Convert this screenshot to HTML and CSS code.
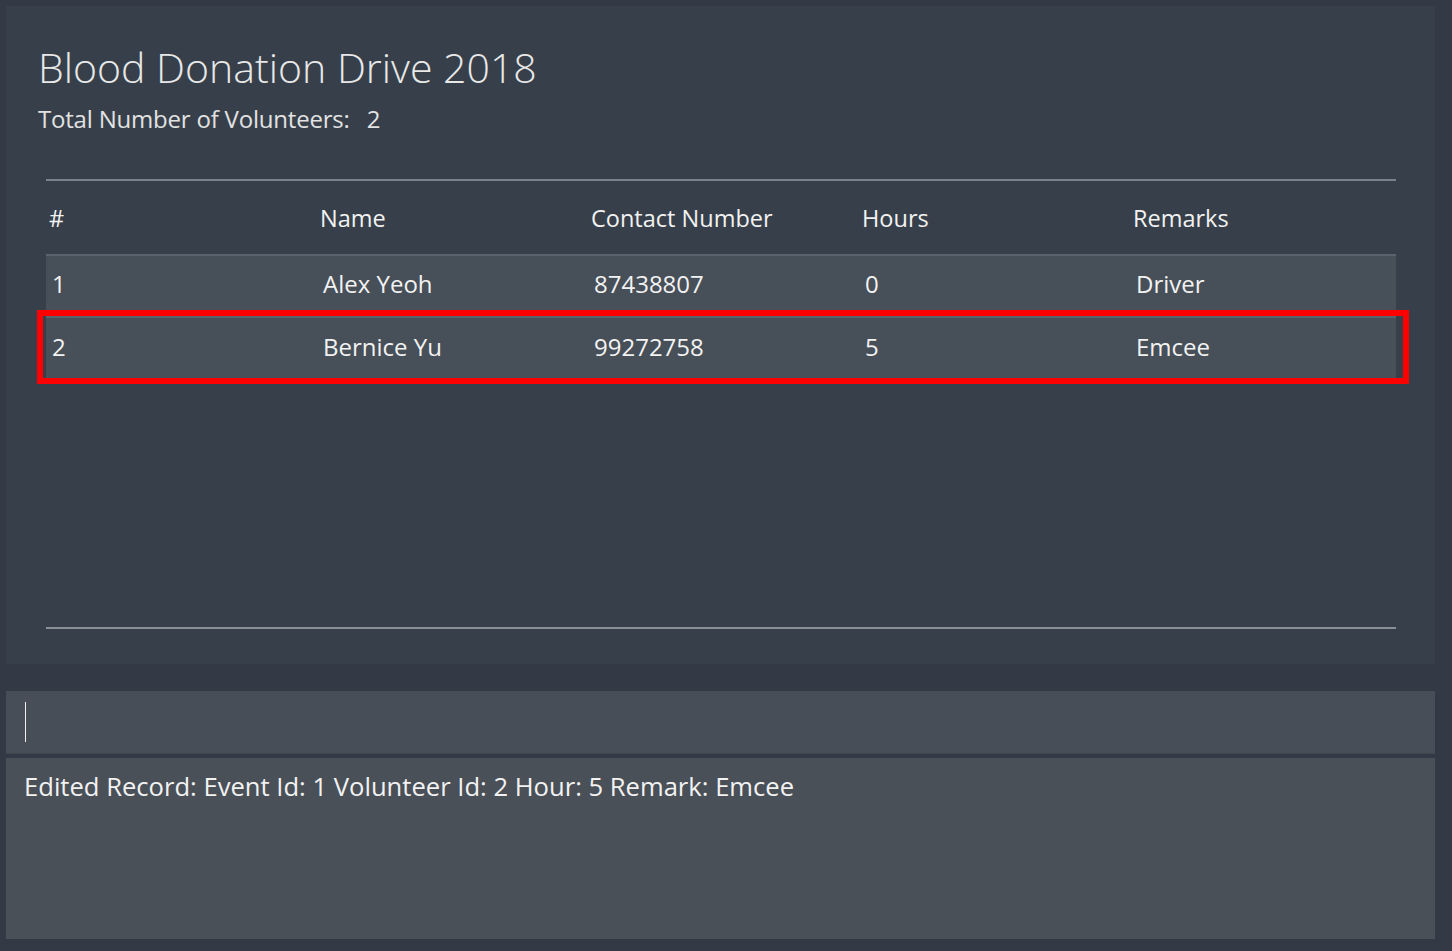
FILE: index.html
```html
<!DOCTYPE html>
<html>
<head>
<meta charset="utf-8">
<link rel="stylesheet" href="styles.css">
</head>
<body>
<div class="app">
  <section class="main-panel">
    <h1 class="title">Blood Donation Drive 2018</h1>
    <div class="count">Total Number of Volunteers:<span class="count-value">2</span></div>
    <div class="table">
      <div class="row head">
        <div class="cell">#</div>
        <div class="cell">Name</div>
        <div class="cell">Contact Number</div>
        <div class="cell">Hours</div>
        <div class="cell">Remarks</div>
      </div>
      <div class="row item">
        <div class="cell">1</div>
        <div class="cell">Alex Yeoh</div>
        <div class="cell">87438807</div>
        <div class="cell">0</div>
        <div class="cell">Driver</div>
      </div>
      <div class="row item selected">
        <div class="cell">2</div>
        <div class="cell">Bernice Yu</div>
        <div class="cell">99272758</div>
        <div class="cell">5</div>
        <div class="cell">Emcee</div>
      </div>
    </div>
  </section>
  <section class="command"><span class="caret"></span></section>
  <section class="result">Edited Record: Event Id: 1 Volunteer Id: 2 Hour: 5 Remark: Emcee</section>
</div>
</body>
</html>
```
FILE: styles.css
```css
html, body {
  margin: 0;
  padding: 0;
  background: #333a45;
  font-family: "Open Sans", "Noto Sans", sans-serif;
  color: #f2f2f2;
}
.app {
  width: 1429px;
  padding: 6px 17px 12px 6px;
  display: flex;
  flex-direction: column;
}
.main-panel {
  background: #37404a;
  height: 658px;
  box-sizing: border-box;
  padding: 36px 39px 0 40px;
  display: flex;
  flex-direction: column;
}
.title {
  margin: 0 0 0 -8px;
  font-weight: 300;
  font-size: 41px;
  line-height: 50px;
  color: #e8e8e8;
}
.count {
  margin: 12px 0 0 -8px;
  font-size: 24px;
  line-height: 30px;
  color: #e2e2e2;
  letter-spacing: -0.2px;
}
.count-value {
  margin-left: 17px;
}
.table {
  margin-top: 45px;
  border-top: 2px solid #79828b;
  border-bottom: 2px solid #8a9097;
  height: 446px;
  display: flex;
  flex-direction: column;
}
.row {
  display: grid;
  grid-template-columns: repeat(4, 271px) 1fr;
  align-items: center;
}
.head {
  height: 73px;
  font-size: 23.5px;
}
.head .cell { padding-left: 3px; }
.item {
  height: 60px;
  box-sizing: content-box;
  padding-bottom: 0;
  background: #474f58;
  border-top: 2px solid #5b636c;
  font-size: 24px;
  position: relative;
}
.item .cell {
  padding-left: 6px;
  padding-bottom: 5px;
}
.selected .cell {
  padding-bottom: 4px;
}
.selected::after {
  content: "";
  position: absolute;
  left: -9px;
  right: -13px;
  top: -8px;
  bottom: -6px;
  border: 6px solid #ff0000;
}
.command {
  margin-top: 27px;
  height: 62px;
  background: #474e57;
  border-bottom: 1px solid #3f464f;
  display: flex;
  align-items: center;
  padding-left: 19px;
}
.caret {
  width: 1px;
  height: 40px;
  background: #f0f0f0;
}
.result {
  margin-top: 4px;
  height: 181px;
  box-sizing: border-box;
  background: #4a5058;
  padding: 13px 18px;
  font-size: 25.6px;
  line-height: 32px;
  color: #f2f2f2;
}
```
